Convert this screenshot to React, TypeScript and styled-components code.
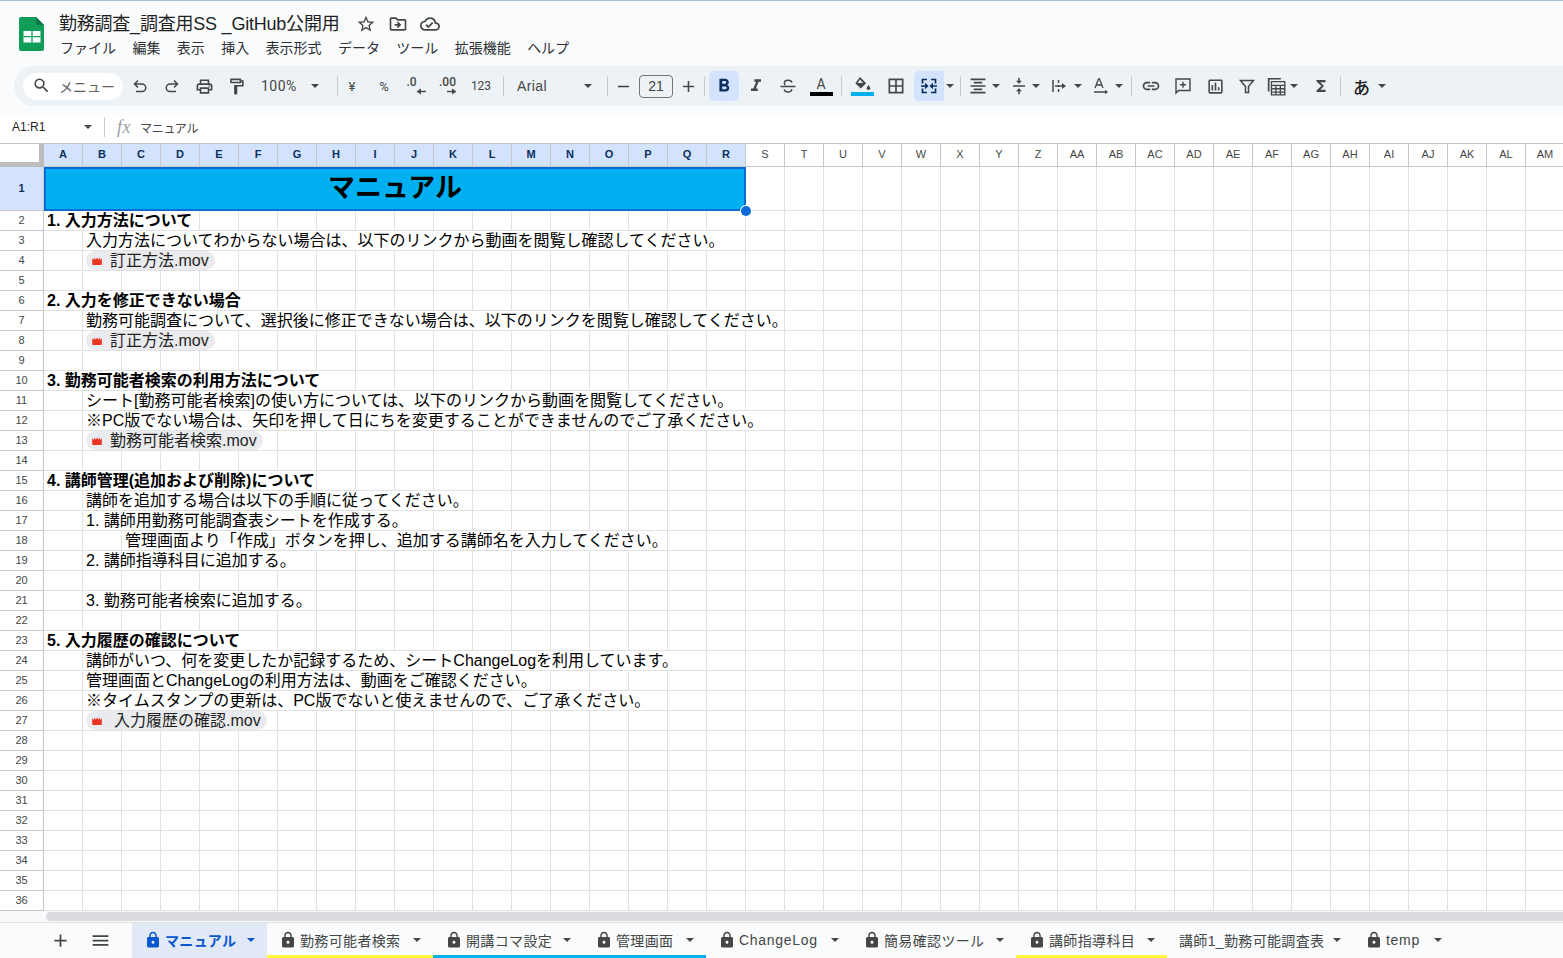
import React from 'react'
import styled, {createGlobalStyle} from 'styled-components'
import {
  MdOutlinePrint, MdOutlineFormatPaint, MdFormatBold, MdFormatItalic,
  MdBorderAll, MdFormatAlignCenter, MdVerticalAlignCenter, MdLink,
  MdOutlineInsertChart, MdFunctions, MdStarBorder, MdOutlineDriveFileMove, MdOutlineCloudDone,
  MdLock, MdAdd, MdMenu, MdSearch, MdRemove,
} from 'react-icons/md'

const CJK = `"Liberation Sans", "Noto Sans CJK JP", sans-serif`

const GlobalStyle = createGlobalStyle`
  html, body { margin: 0; padding: 0; background: #f9fbfd; }
  body { font-family: ${CJK}; }
`

const Page = styled.div`
  width: 1563px;
  height: 958px;
  overflow: hidden;
  display: flex;
  flex-direction: column;
  background: #f9fbfd;
  border-top: 1px solid #a9bdd2;
  box-sizing: border-box;
  color: #1f1f1f;
`

const Header = styled.div`
  height: 65px;
  display: flex;
  padding-left: 19px;
  flex: none;
`

const Logo = styled.svg`
  width: 25px;
  height: 34px;
  margin-top: 16px;
  flex: none;
`

const TitleColumn = styled.div`
  margin-left: 15px;
  display: flex;
  flex-direction: column;
`

const TitleRow = styled.div`
  display: flex;
  align-items: center;
  height: 24px;
  margin-top: 11px;
`

const Title = styled.div`
  font-size: 18px;
  letter-spacing: -0.22px;
  color: #1f1f1f;
  white-space: nowrap;
  width: 279px;
  padding-bottom: 4px;
`

const TitleIcons = styled.div`
  display: flex;
  align-items: center;
  gap: 12px;
  margin-left: 18px;
  color: #444746;
  font-size: 20px;
`

const MenuBar = styled.div`
  display: flex;
  gap: 16.4px;
  margin-top: 2px;
  margin-left: 1px;
  font-size: 14px;
  line-height: 20px;
  color: #303134;
`

const Toolbar = styled.div`
  height: 40px;
  margin-left: 14px;
  padding-left: 9px;
  flex: none;
  display: flex;
  align-items: center;
  background: #edf2f7;
  border-radius: 20px 0 0 20px;
  color: #444746;
`

const SearchPill = styled.div`
  width: 100px;
  height: 27px;
  box-sizing: border-box;
  padding: 0 0 1px 9px;
  margin-right: 1px;
  flex: none;
  display: flex;
  align-items: center;
  gap: 8px;
  background: #fff;
  border-radius: 14px;
  font-size: 14px;
  color: #5f6368;
  svg { font-size: 19px; color: #444746; }
`

const Tool = styled.div<{$w?: number; $ml?: number; $active?: boolean}>`
  width: ${(p) => p.$w ?? 32}px;
  height: 30px;
  margin-left: ${(p) => p.$ml ?? 0}px;
  flex: none;
  position: relative;
  display: flex;
  align-items: center;
  justify-content: center;
  font-size: 19px;
  border-radius: 5px;
  color: ${(p) => (p.$active ? '#0b2f5e' : '#444746')};
  background: ${(p) => (p.$active ? '#d3e3fd' : 'transparent')};
`

const MergeTool = styled(Tool)`
  border-radius: 5px 0 0 5px;
`

const ToolText = styled.span<{$size?: number}>`
  font-family: "Roboto", "Liberation Sans", sans-serif;
  font-size: ${(p) => p.$size ?? 12}px;
  color: #444746;
`

const Sep = styled.div<{$ml?: number}>`
  width: 1px;
  height: 20px;
  margin-left: ${(p) => p.$ml ?? 0}px;
  background: #c7c9cc;
  flex: none;
`

const Caret = styled.span<{$color?: string}>`
  display: inline-block;
  flex: none;
  width: 0;
  height: 0;
  border-left: 4px solid transparent;
  border-right: 4px solid transparent;
  border-top: 4px solid ${(p) => p.$color ?? '#444746'};
`

const Dropdown = styled.div<{$w: number; $pl: number; $gap?: number; $ml?: number}>`
  width: ${(p) => p.$w}px;
  height: 30px;
  margin-left: ${(p) => p.$ml ?? 0}px;
  box-sizing: border-box;
  padding-left: ${(p) => p.$pl}px;
  flex: none;
  display: flex;
  align-items: center;
  justify-content: flex-start;
  gap: ${(p) => p.$gap ?? 0}px;
  font-size: 14px;
  color: #444746;
`

const ZoomText = styled.span`
  font-family: "Roboto", sans-serif;
  font-size: 14px;
  letter-spacing: 0.5px;
  width: 50px;
`

const FontName = styled.span`
  font-size: 14px;
  letter-spacing: 0.4px;
  width: 67px;
`

const SizeBox = styled.div`
  width: 34px;
  height: 23px;
  box-sizing: border-box;
  flex: none;
  border: 1px solid #747775;
  border-radius: 4px;
  display: flex;
  align-items: center;
  justify-content: center;
  font-size: 14px;
  color: #444746;
`

const Decimal = styled.div`
  display: flex;
  flex-direction: column;
  align-items: flex-start;
  font-family: "Roboto", sans-serif;
  font-size: 12px;
  font-weight: 500;
  line-height: 11px;
  color: #444746;
`

const DecimalArrow = styled.svg<{$ml: number}>`
  width: 10px;
  height: 7px;
  margin-left: ${(p) => p.$ml}px;
`

const ColorGlyph = styled.div`
  display: flex;
  flex-direction: column;
  align-items: center;
  width: 23px;
`

const ColorLetter = styled.span`
  font-family: "Roboto", sans-serif;
  font-size: 14px;
  line-height: 14px;
  color: #444746;
`

const ColorBar = styled.div<{$color: string}>`
  width: 23px;
  height: 4px;
  background: ${(p) => p.$color};
  margin-top: 1px;
`

const Kana = styled.span`
  font-size: 17px;
  font-weight: 500;
  color: #1f1f1f;
`

const FormulaBar = styled.div`
  height: 29px;
  box-sizing: border-box;
  padding-bottom: 3px;
  flex: none;
  margin-top: 8px;
  display: flex;
  align-items: center;
  background: #fff;
  color: #444746;
  font-size: 12px;
  letter-spacing: -0.3px;
`

const NameBox = styled.div`
  width: 80px;
  padding-left: 12px;
  display: flex;
  align-items: center;
  justify-content: space-between;
  color: #1f1f1f;
  letter-spacing: 0;
`

const Fx = styled.span`
  font-family: "Liberation Serif", serif;
  font-style: italic;
  font-size: 18px;
  letter-spacing: 0.5px;
  color: #9aa0a6;
  margin-left: 12px;
  width: 23px;
`

const Grid = styled.div`
  position: relative;
  flex: none;
  background: #fff;
  width: 1563px;
  overflow: hidden;
`

const Row = styled.div<{$h: number}>`
  display: grid;
  grid-template-columns: 44px repeat(39, 39px);
  height: ${(p) => p.$h}px;
`

const Corner = styled.div`
  box-sizing: border-box;
  background: #fff;
  border-top: 1px solid #c7c7c7;
  border-right: 5px solid #bdbdbd;
  border-bottom: 5px solid #bdbdbd;
`

const ColHead = styled.div<{$sel: boolean}>`
  box-sizing: border-box;
  padding-bottom: 2px;
  display: flex;
  align-items: center;
  justify-content: center;
  border-top: 1px solid #c7c7c7;
  border-right: 1px solid #c7c7c7;
  border-bottom: 1px solid #c7c7c7;
  background: ${(p) => (p.$sel ? '#d3e3fd' : '#fff')};
  color: ${(p) => (p.$sel ? '#0b2f5e' : '#444746')};
  font-family: "Liberation Sans", sans-serif;
  font-size: 11px;
  font-weight: ${(p) => (p.$sel ? 700 : 400)};
`

const RowHead = styled.div<{$sel?: boolean}>`
  box-sizing: border-box;
  padding-bottom: 2px;
  display: flex;
  align-items: center;
  justify-content: center;
  border-right: 1px solid #c7c7c7;
  border-bottom: 1px solid #c7c7c7;
  background: ${(p) => (p.$sel ? '#d3e3fd' : '#fff')};
  color: ${(p) => (p.$sel ? '#0b2f5e' : '#444746')};
  font-size: 11px;
  font-weight: ${(p) => (p.$sel ? 700 : 400)};
  font-family: "Liberation Sans", sans-serif;
`

const Cell = styled.div<{$span?: number}>`
  box-sizing: border-box;
  min-width: 0;
  grid-column: span ${(p) => p.$span ?? 1};
  border-right: 1px solid #e1e1e1;
  border-bottom: 1px solid #e1e1e1;
  padding-left: 3px;
  display: flex;
  align-items: center;
  font-size: 16px;
  line-height: 19px;
  white-space: nowrap;
  color: #000;
`

const BoldText = styled.span`
  font-weight: 700;
`

const MergedTitle = styled.div`
  box-sizing: border-box;
  grid-column: span 18;
  background: #00b0f0;
  border: 2px solid #0b6bd6;
  padding-bottom: 2px;
  display: flex;
  align-items: center;
  justify-content: center;
  font-size: 27px;
  line-height: 30px;
  font-weight: 700;
  color: #000;
`

const Handle = styled.div`
  position: absolute;
  left: 741px;
  top: 63px;
  width: 10px;
  height: 10px;
  box-sizing: border-box;
  border-radius: 50%;
  background: #0b6bd6;
  box-shadow: 0 0 0 1px #fff;
`

const Chip = styled.div<{$gap: number}>`
  height: 19px;
  display: inline-flex;
  align-items: center;
  gap: ${(p) => p.$gap}px;
  padding: 0 6px;
  border-radius: 10px;
  background: #e9ebee;
  color: #1f1f1f;
  font-size: 16px;
`

const ScrollTrack = styled.div`
  height: 12px;
  flex: none;
  background: #f8f9fa;
  border-bottom: 1px solid #e1e3e1;
  padding-left: 46px;
  box-sizing: border-box;
  display: flex;
  align-items: center;
`

const ScrollThumb = styled.div`
  flex: 1;
  height: 9px;
  background: #dadce0;
  border-radius: 5px 0 0 5px;
`

const TabBar = styled.div`
  flex: 1;
  display: flex;
  background: #f9fbfd;
`

const BarButtons = styled.div`
  width: 132px;
  flex: none;
  display: flex;
  align-items: center;
  padding-left: 50px;
  box-sizing: border-box;
  gap: 19px;
  color: #444746;
  font-size: 21px;
`

const Tab = styled.div<{$w: number; $active?: boolean; $line?: string; $latin?: boolean}>`
  width: ${(p) => p.$w}px;
  flex: none;
  box-sizing: border-box;
  padding: 2px 12px 0 12px;
  display: flex;
  align-items: center;
  justify-content: space-between;
  background: ${(p) => (p.$active ? '#e1e9f7' : 'transparent')};
  border-bottom: 3px solid ${(p) => p.$line ?? 'transparent'};
  color: ${(p) => (p.$active ? '#0b57d0' : '#444746')};
  font-size: 14px;
  font-weight: ${(p) => (p.$active ? 700 : 400)};
  letter-spacing: ${(p) => (p.$latin ? 0.7 : 0.35)}px;
  white-space: nowrap;
`

const TabLabel = styled.div`
  display: flex;
  align-items: center;
  gap: 3px;
  svg { font-size: 18px; flex: none; }
`

const COLS = [
  ...'ABCDEFGHIJKLMNOPQRSTUVWXYZ'.split(''),
  ...'ABCDEFGHIJKLM'.split('').map((c) => `A${c}`),
]

type RowData = {col: number; span: number; text: string; bold?: boolean; chip?: boolean; gap?: number}

const ROWS: Record<number, RowData> = {
  2: {col: 0, span: 4, bold: true, text: '1. 入力方法について'},
  3: {col: 1, span: 17, text: '入力方法についてわからない場合は、以下のリンクから動画を閲覧し確認してください。'},
  4: {col: 1, span: 4, chip: true, text: '訂正方法.mov'},
  6: {col: 0, span: 6, bold: true, text: '2. 入力を修正できない場合'},
  7: {col: 1, span: 18, text: '勤務可能調査について、選択後に修正できない場合は、以下のリンクを閲覧し確認してください。'},
  8: {col: 1, span: 4, chip: true, text: '訂正方法.mov'},
  10: {col: 0, span: 8, bold: true, text: '3. 勤務可能者検索の利用方法について'},
  11: {col: 1, span: 17, text: 'シート[勤務可能者検索]の使い方については、以下のリンクから動画を閲覧してください。'},
  12: {col: 1, span: 18, text: '※PC版でない場合は、矢印を押して日にちを変更することができませんのでご了承ください。'},
  13: {col: 1, span: 5, chip: true, text: '勤務可能者検索.mov'},
  15: {col: 0, span: 7, bold: true, text: '4. 講師管理(追加および削除)について'},
  16: {col: 1, span: 10, text: '講師を追加する場合は以下の手順に従ってください。'},
  17: {col: 1, span: 9, text: '1. 講師用勤務可能調査表シートを作成する。'},
  18: {col: 2, span: 14, text: '管理画面より「作成」ボタンを押し、追加する講師名を入力してください。'},
  19: {col: 1, span: 6, text: '2. 講師指導科目に追加する。'},
  21: {col: 1, span: 6, text: '3. 勤務可能者検索に追加する。'},
  23: {col: 0, span: 6, bold: true, text: '5. 入力履歴の確認について'},
  24: {col: 1, span: 16, text: '講師がいつ、何を変更したか記録するため、シートChangeLogを利用しています。'},
  25: {col: 1, span: 12, text: '管理画面とChangeLogの利用方法は、動画をご確認ください。'},
  26: {col: 1, span: 15, text: '※タイムスタンプの更新は、PC版でないと使えませんので、ご了承ください。'},
  27: {col: 1, span: 5, chip: true, gap: 12, text: '入力履歴の確認.mov'},
}

const TABS = [
  {name: 'マニュアル', w: 135, active: true, lock: true},
  {name: '勤務可能者検索', w: 166, line: '#fff740', lock: true},
  {name: '開講コマ設定', w: 150, line: '#00b0f0', lock: true},
  {name: '管理画面', w: 123, line: '#00b0f0', lock: true},
  {name: 'ChangeLog', w: 145, lock: true, latin: true},
  {name: '簡易確認ツール', w: 165, lock: true},
  {name: '講師指導科目', w: 151, line: '#fff740', lock: true},
  {name: '講師1_勤務可能調査表', w: 186, lock: false},
  {name: 'temp', w: 101, lock: true, latin: true},
]

const SheetsLogo = () => (
  <Logo viewBox="0 0 25 34">
    <path d="M2 0h15l8 8v24a2 2 0 0 1-2 2H2a2 2 0 0 1-2-2V2a2 2 0 0 1 2-2z" fill="#0f9d58" />
    <path d="M17 0l8 8h-6a2 2 0 0 1-2-2z" fill="#0b7a44" />
    <path d="M4.500 14h17v11.500h-17z" fill="#fff" />
    <path d="M13 14v11.500M4.500 19.700h17" stroke="#0f9d58" strokeWidth="1.300" />
  </Logo>
)

const Line = ({d, w = 1.5}: {d: string; w?: number}) => (
  <path d={d} fill="none" stroke="currentColor" strokeWidth={w} />
)

const Icon = ({size = 18, children}: {size?: number; children: React.ReactNode}) => (
  <svg width={size} height={size} viewBox="0 0 18 18">{children}</svg>
)

const UndoIcon = () => (
  <Icon><Line d="M7 3.500L3.500 7 7 10.500M3.500 7H11a3.600 3.600 0 0 1 0 7.500H5" /></Icon>
)
const RedoIcon = () => (
  <Icon><Line d="M11 3.500L14.500 7 11 10.500M14.500 7H7a3.600 3.600 0 0 0 0 7.500h6" /></Icon>
)
const StrikeIcon = () => (
  <Icon>
    <Line d="M13 5.500C12.500 4 11 3.300 9 3.300S5.300 4.300 5.300 6c0 .9.400 1.500 1 2M1.500 9.500h15M12.800 12c0 2-1.800 3-3.800 3s-3.400-1-3.900-2.500" w={1.400} />
  </Icon>
)
const MergeIcon = () => (
  <Icon>
    <Line d="M7 2.500H2.500v4M7 15.500H2.500v-4M11 2.500h4.500v4M11 15.500h4.500v-4M1 9h4.500M17 9h-4.500" w={1.700} />
    <path d="M8.500 9L5 5.800v6.400zM9.500 9L13 5.800v6.400z" fill="currentColor" />
  </Icon>
)
const WrapIcon = () => (
  <Icon>
    <Line d="M3 3v12M8.500 3v3M8.500 8v2M8.500 12v3M5 9h9" />
    <path d="M16 9l-4-3v6z" fill="currentColor" />
  </Icon>
)
const RotateIcon = () => (
  <Icon>
    <Line d="M3 11L6.500 2h1L11 11M4.500 8h5M2 15h12" w={1.300} />
    <path d="M16 15l-3-2.200v4.400z" fill="currentColor" />
  </Icon>
)
const CommentIcon = () => (
  <Icon>
    <Line d="M2 2h14v11.500H4.500L2 16zM9 4.800v6M6 7.800h6" w={1.400} />
  </Icon>
)
const FilterIcon = () => (
  <Icon><Line d="M2.500 3.500h13L10.500 9.500v6h-3v-6z" /></Icon>
)
const CalcIcon = () => (
  <Icon size={20}>
    <Line d="M1.500 14V2.500h11" />
    <Line d="M4 5h12v12H4zM4 8.500h12M4 11.500h12M4 14.500h12M8 8.500V17M12 8.500V17" w={1.200} />
  </Icon>
)
const FillIcon = () => (
  <svg width="22" height="15" viewBox="0 0 22 15">
    <path d="M9 1l6.200 6.200L9.800 12.500 4.300 7.200z" fill="#444746" />
    <path d="M9 3.600L6.500 7.100h5.500z" fill="#edf2f7" />
    <path d="M17.500 9s-1.800 2-1.800 3.200a1.800 1.800 0 0 0 3.600 0C19.300 11 17.500 9 17.500 9z" fill="#444746" />
  </svg>
)
const LeftArrow = () => (
  <DecimalArrow $ml={9} viewBox="0 0 10 7">
    <path d="M4 3.500h6" stroke="#444746" strokeWidth="1.400" />
    <path d="M0.500 3.500L5 0.500v6z" fill="#444746" />
  </DecimalArrow>
)
const RightArrow = () => (
  <DecimalArrow $ml={8} viewBox="0 0 10 7">
    <path d="M0 3.500h6" stroke="#444746" strokeWidth="1.400" />
    <path d="M9.500 3.500L5 0.500v6z" fill="#444746" />
  </DecimalArrow>
)
const ClapperIcon = () => (
  <svg width="10" height="8" viewBox="0 0 12 10">
    <path d="M0 2l2 1.500L3 .5l1.500 3L6 .5l1.500 3L9 .5l1 3L12 2v7a1 1 0 0 1-1 1H1a1 1 0 0 1-1-1z" fill="#ea3323" />
  </svg>
)

export default function App() {
  return (
    <>
      <GlobalStyle />
      <Page>
        <Header>
          <SheetsLogo />
          <TitleColumn>
            <TitleRow>
              <Title>勤務調査_調査用SS _GitHub公開用</Title>
              <TitleIcons>
                <MdStarBorder />
                <MdOutlineDriveFileMove />
                <MdOutlineCloudDone />
              </TitleIcons>
            </TitleRow>
            <MenuBar>
              {['ファイル', '編集', '表示', '挿入', '表示形式', 'データ', 'ツール', '拡張機能', 'ヘルプ'].map((m) => (
                <span key={m}>{m}</span>
              ))}
            </MenuBar>
          </TitleColumn>
        </Header>

        <Toolbar>
          <SearchPill><MdSearch />メニュー</SearchPill>
          <Tool><UndoIcon /></Tool>
          <Tool><RedoIcon /></Tool>
          <Tool><MdOutlinePrint /></Tool>
          <Tool><MdOutlineFormatPaint /></Tool>
          <Dropdown $w={77} $pl={9}><ZoomText>100%</ZoomText><Caret /></Dropdown>
          <Sep $ml={8} />
          <Tool $w={28}><ToolText $size={13}>¥</ToolText></Tool>
          <Tool $ml={2}><ToolText $size={13}>%</ToolText></Tool>
          <Tool><Decimal>.0<LeftArrow /></Decimal></Tool>
          <Tool><Decimal>.00<RightArrow /></Decimal></Tool>
          <Tool $ml={1}><ToolText>123</ToolText></Tool>
          <Sep $ml={6} />
          <Dropdown $w={96} $pl={13}><FontName>Arial</FontName><Caret /></Dropdown>
          <Sep $ml={7} />
          <Tool $w={31}><MdRemove /></Tool>
          <SizeBox>21</SizeBox>
          <Tool $w={31}><MdAdd /></Tool>
          <Sep />
          <Tool $w={30} $ml={4} $active><MdFormatBold size={22} /></Tool>
          <Tool $ml={1}><MdFormatItalic size={20} /></Tool>
          <Tool><StrikeIcon /></Tool>
          <Tool $ml={1}>
            <ColorGlyph><ColorLetter>A</ColorLetter><ColorBar $color="#000" /></ColorGlyph>
          </Tool>
          <Sep $ml={4} />
          <Tool $ml={4}>
            <ColorGlyph><FillIcon /><ColorBar $color="#00b0f0" /></ColorGlyph>
          </Tool>
          <Tool $ml={2}><MdBorderAll size={20} /></Tool>
          <MergeTool $w={30} $ml={2} $active><MergeIcon /></MergeTool>
          <Tool $w={12}><Caret /></Tool>
          <Sep $ml={4} />
          <Dropdown $w={49} $pl={7} $gap={4}><MdFormatAlignCenter size={20} /><Caret /></Dropdown>
          <Dropdown $w={39} $pl={0} $gap={4}><MdVerticalAlignCenter size={18} /><Caret /></Dropdown>
          <Dropdown $w={40} $pl={1} $gap={6}><WrapIcon /><Caret /></Dropdown>
          <Dropdown $w={42} $pl={3} $gap={5}><RotateIcon /><Caret /></Dropdown>
          <Sep />
          <Tool $ml={3}><MdLink size={20} /></Tool>
          <Tool><CommentIcon /></Tool>
          <Tool><MdOutlineInsertChart /></Tool>
          <Tool><FilterIcon /></Tool>
          <Dropdown $w={42} $pl={4} $gap={3}><CalcIcon /><Caret /></Dropdown>
          <Tool><MdFunctions size={18} /></Tool>
          <Sep $ml={3} />
          <Dropdown $w={54} $pl={12} $gap={8}><Kana>あ</Kana><Caret /></Dropdown>
        </Toolbar>

        <FormulaBar>
          <NameBox>A1:R1<Caret /></NameBox>
          <Sep $ml={12} />
          <Fx>fx</Fx>
          マニュアル
        </FormulaBar>

        <Grid>
          <Row $h={24}>
            <Corner />
            {COLS.map((c, i) => <ColHead key={c} $sel={i < 18}>{c}</ColHead>)}
          </Row>
          <Row $h={44}>
            <RowHead $sel>1</RowHead>
            <MergedTitle>マニュアル</MergedTitle>
            {COLS.slice(18).map((c) => <Cell key={c} />)}
          </Row>
          {Array.from({length: 35}, (_, n) => n + 2).map((n) => {
            const d = ROWS[n]
            const before = d ? d.col : 0
            const span = d ? d.span : 0
            return (
              <Row key={n} $h={20}>
                <RowHead>{n}</RowHead>
                {COLS.slice(0, before).map((c) => <Cell key={c} />)}
                {d && (
                  <Cell $span={span}>
                    {d.chip
                      ? <Chip $gap={d.gap ?? 8}><ClapperIcon />{d.text}</Chip>
                      : d.bold ? <BoldText>{d.text}</BoldText> : d.text}
                  </Cell>
                )}
                {COLS.slice(before + span).map((c) => <Cell key={c} />)}
              </Row>
            )
          })}
          <Handle />
        </Grid>

        <ScrollTrack><ScrollThumb /></ScrollTrack>

        <TabBar>
          <BarButtons><MdAdd /><MdMenu /></BarButtons>
          {TABS.map((t) => (
            <Tab key={t.name} $w={t.w} $active={t.active} $line={t.line} $latin={t.latin}>
              <TabLabel>
                {t.lock && <MdLock />}
                {t.name}
              </TabLabel>
              <Caret $color={t.active ? '#0b57d0' : '#444746'} />
            </Tab>
          ))}
        </TabBar>
      </Page>
    </>
  )
}
